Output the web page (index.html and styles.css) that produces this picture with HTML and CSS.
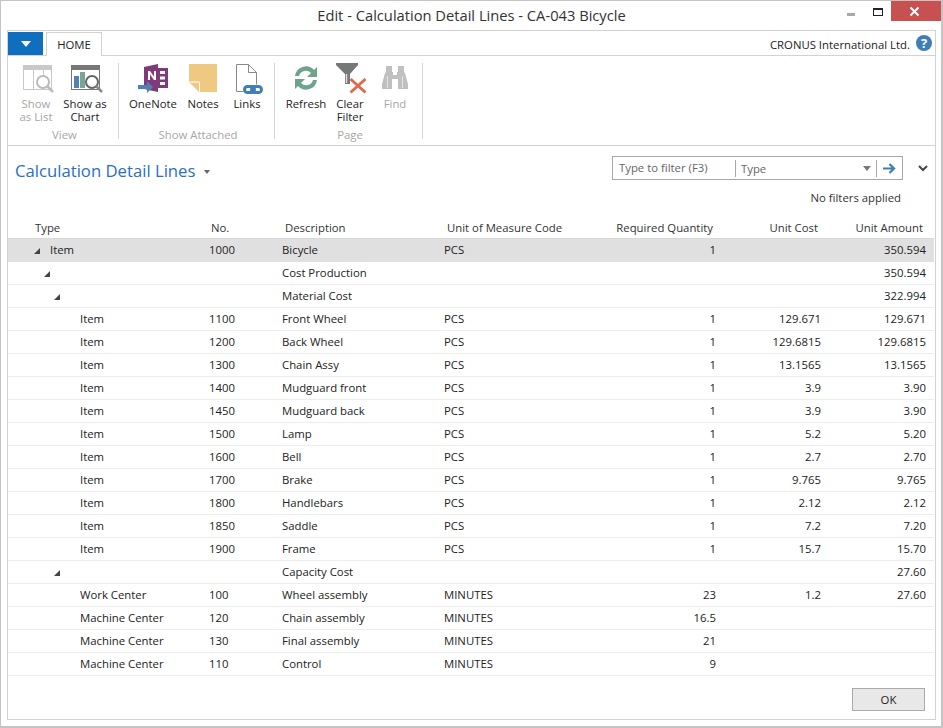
FILE: index.html
```html
<!DOCTYPE html>
<html lang="en">
<head>
<meta charset="utf-8">
<title>Edit - Calculation Detail Lines - CA-043 Bicycle</title>
<link rel="stylesheet" href="styles.css">
</head>
<body>
<div class="window">
  <header class="titlebar">
    <div class="title">Edit - Calculation Detail Lines - CA-043 Bicycle</div>
    <div class="controls">
      <span class="min"></span>
      <span class="max"></span>
      <span class="close"><svg width="11" height="11" viewBox="0 0 11 11"><path d="M1.5 1.5l8 8M9.5 1.5l-8 8" stroke="#fff" stroke-width="2"/></svg></span>
    </div>
  </header>
  <div class="frame">
    <div class="tabs">
      <div class="appbtn"><svg width="10" height="6" viewBox="0 0 10 6"><path d="M0 0h10L5 6z" fill="#fff"/></svg></div>
      <div class="tab">HOME</div>
      <div class="company">CRONUS International Ltd.</div>
      <div class="help">?</div>
    </div>
    <div class="ribbon">
      <section class="group g-view">
        <div class="actions">
          <div class="action off w1">
            <svg width="36" height="30" viewBox="0 0 36 30"><rect x="5.500" y="2.500" width="28" height="24" fill="#fff" stroke="#c8c8c8"/><rect x="5" y="2" width="29" height="5" fill="#c8c8c8"/><path d="M15.500 7v19M25.500 7v19" stroke="#c8c8c8"/><circle cx="25" cy="19" r="6" fill="#fff" stroke="#bbb" stroke-width="2"/><path d="M29 23l6 6" stroke="#bbb" stroke-width="2.500"/></svg>
            <span>Show<br>as List</span>
          </div>
          <div class="action w2">
            <svg width="36" height="30" viewBox="0 0 36 30"><rect x="4.500" y="2.500" width="28" height="24" fill="#fff" stroke="#777"/><rect x="4" y="2" width="29" height="5" fill="#777"/><rect x="7" y="13" width="5" height="12" fill="#4f81b5"/><rect x="13" y="9" width="5" height="16" fill="#7aa58f"/><circle cx="25" cy="19" r="6" fill="#fff" stroke="#666" stroke-width="2"/><path d="M29 23l6 6" stroke="#888" stroke-width="2.500"/></svg>
            <span>Show as<br>Chart</span>
          </div>
        </div>
        <div class="gname">View</div>
      </section>
      <section class="group g-att">
        <div class="actions">
          <div class="action w3">
            <svg width="32" height="30" viewBox="0 0 32 30"><path d="M7 4l14-3v28l-14-3z" fill="#80397b"/><rect x="21" y="5" width="10" height="20" fill="#80397b"/><path d="M23 8h5v3h-5zM23 13.500h5v3h-5zM23 19h5v3h-5z" fill="#fff"/><path d="M11 17V8h2l4 5.500V8h2v9h-2l-4-5.500V17z" fill="#fff"/><path d="M1 22h9v-4l6 6-6 6v-4H1z" fill="#4f81b5"/></svg>
            <span>OneNote</span>
          </div>
          <div class="action w4">
            <svg width="28" height="28" viewBox="0 0 28 28"><path d="M0 0h28v28H10L0 18z" fill="#efc882"/><path d="M0.500 18h10v9.500" fill="none" stroke="#fff"/></svg>
            <span>Notes</span>
          </div>
          <div class="action w5">
            <svg width="32" height="30" viewBox="0 0 32 30"><path d="M5.500 1.500h12l8 8v12M5.500 1.500v27h7M17.500 1.500v8h8" fill="#fff" stroke="#888"/><g fill="none" stroke="#3f7fb5" stroke-width="3"><rect x="13.500" y="23.500" width="10" height="6" rx="3"/><rect x="20.500" y="23.500" width="10" height="6" rx="3"/></g></svg>
            <span>Links</span>
          </div>
        </div>
        <div class="gname">Show Attached</div>
      </section>
      <section class="group g-page">
        <div class="actions">
          <div class="action w6">
            <svg width="28" height="28" viewBox="0 0 28 28"><path d="M3 12a11 11 0 0 1 19-6l3-3v10H15l4-4A7 7 0 0 0 7 12z" fill="#6fa48c"/><path d="M25 16a11 11 0 0 1-19 6l-3 3V15h10l-4 4a7 7 0 0 0 12-3z" fill="#6fa48c"/></svg>
            <span>Refresh</span>
          </div>
          <div class="action w7">
            <svg width="36" height="30" viewBox="0 0 36 30"><path d="M4 0h22v2l-8 9v10h-5V11L4 2z" fill="#777"/><path d="M14.500 11v9" stroke="#ddd" stroke-width="1.500"/><path d="M18.500 16l15 13.500M33.500 16l-15 13.500" stroke="#dc6a4e" stroke-width="3"/></svg>
            <span>Clear<br>Filter</span>
          </div>
          <div class="action off w8">
            <svg width="28" height="30" viewBox="0 0 28 30"><path d="M5 3h6v6h1v3h4V9h1V3h6v6l1 1 3 11v5H17V16h-6v10H1v-5l3-11 1-1z" fill="#c0c0c0"/><path d="M6.500 13v12M21.500 13v12" stroke="#e4e4e4"/></svg>
            <span>Find</span>
          </div>
        </div>
        <div class="gname">Page</div>
      </section>
    </div>
    <main class="content">
      <div class="pagehead">
        <h1 class="pagetitle">Calculation Detail Lines<svg class="caret" width="6" height="4" viewBox="0 0 6 4"><path d="M0 0h6L3 4z" fill="#666"/></svg></h1>
        <div class="filterwrap">
          <div class="filterrow">
            <div class="filter">
              <div class="f-input">Type to filter (F3)</div>
              <div class="f-field">Type<svg width="8" height="5" viewBox="0 0 8 5"><path d="M0 0h8L4 5z" fill="#777"/></svg></div>
              <div class="f-go"><svg width="13" height="11" viewBox="0 0 13 11"><path d="M0 5.500h10M6.500 1l4.500 4.500L6.500 10" fill="none" stroke="#3f7fb5" stroke-width="2.200"/></svg></div>
            </div>
            <svg class="chev" width="10" height="7" viewBox="0 0 10 7"><path d="M1 1l4 4 4-4" fill="none" stroke="#444" stroke-width="2"/></svg>
          </div>
          <div class="nofilter">No filters applied</div>
        </div>
      </div>
      <table class="grid">
        <colgroup>
          <col class="c1"><col class="c2"><col class="c3"><col class="c4"><col class="c5"><col class="c6"><col class="c7">
        </colgroup>
        <thead>
          <tr><th class="h-type">Type</th><th class="l h-no">No.</th><th class="l">Description</th><th class="l">Unit of Measure Code</th><th class="r">Required Quantity</th><th class="r">Unit Cost</th><th class="r">Unit Amount</th></tr>
        </thead>
        <tbody>
          <tr class="sel"><td class="tree"><i class="arr a0"></i>Item</td><td>1000</td><td>Bicycle</td><td>PCS</td><td class="n">1</td><td class="n"></td><td class="n">350.594</td></tr>
          <tr><td class="tree"><i class="arr a1"></i></td><td></td><td>Cost Production</td><td></td><td class="n"></td><td class="n"></td><td class="n">350.594</td></tr>
          <tr><td class="tree"><i class="arr a2"></i></td><td></td><td>Material Cost</td><td></td><td class="n"></td><td class="n"></td><td class="n">322.994</td></tr>
          <tr><td class="leaf">Item</td><td>1100</td><td>Front Wheel</td><td>PCS</td><td class="n">1</td><td class="n">129.671</td><td class="n">129.671</td></tr>
          <tr><td class="leaf">Item</td><td>1200</td><td>Back Wheel</td><td>PCS</td><td class="n">1</td><td class="n">129.6815</td><td class="n">129.6815</td></tr>
          <tr><td class="leaf">Item</td><td>1300</td><td>Chain Assy</td><td>PCS</td><td class="n">1</td><td class="n">13.1565</td><td class="n">13.1565</td></tr>
          <tr><td class="leaf">Item</td><td>1400</td><td>Mudguard front</td><td>PCS</td><td class="n">1</td><td class="n">3.9</td><td class="n">3.90</td></tr>
          <tr><td class="leaf">Item</td><td>1450</td><td>Mudguard back</td><td>PCS</td><td class="n">1</td><td class="n">3.9</td><td class="n">3.90</td></tr>
          <tr><td class="leaf">Item</td><td>1500</td><td>Lamp</td><td>PCS</td><td class="n">1</td><td class="n">5.2</td><td class="n">5.20</td></tr>
          <tr><td class="leaf">Item</td><td>1600</td><td>Bell</td><td>PCS</td><td class="n">1</td><td class="n">2.7</td><td class="n">2.70</td></tr>
          <tr><td class="leaf">Item</td><td>1700</td><td>Brake</td><td>PCS</td><td class="n">1</td><td class="n">9.765</td><td class="n">9.765</td></tr>
          <tr><td class="leaf">Item</td><td>1800</td><td>Handlebars</td><td>PCS</td><td class="n">1</td><td class="n">2.12</td><td class="n">2.12</td></tr>
          <tr><td class="leaf">Item</td><td>1850</td><td>Saddle</td><td>PCS</td><td class="n">1</td><td class="n">7.2</td><td class="n">7.20</td></tr>
          <tr><td class="leaf">Item</td><td>1900</td><td>Frame</td><td>PCS</td><td class="n">1</td><td class="n">15.7</td><td class="n">15.70</td></tr>
          <tr><td class="tree"><i class="arr a2"></i></td><td></td><td>Capacity Cost</td><td></td><td class="n"></td><td class="n"></td><td class="n">27.60</td></tr>
          <tr><td class="leaf">Work Center</td><td>100</td><td>Wheel assembly</td><td>MINUTES</td><td class="n">23</td><td class="n">1.2</td><td class="n">27.60</td></tr>
          <tr><td class="leaf">Machine Center</td><td>120</td><td>Chain assembly</td><td>MINUTES</td><td class="n">16.5</td><td class="n"></td><td class="n"></td></tr>
          <tr><td class="leaf">Machine Center</td><td>130</td><td>Final assembly</td><td>MINUTES</td><td class="n">21</td><td class="n"></td><td class="n"></td></tr>
          <tr><td class="leaf">Machine Center</td><td>110</td><td>Control</td><td>MINUTES</td><td class="n">9</td><td class="n"></td><td class="n"></td></tr>
        </tbody>
      </table>
      <div class="footer"><button class="ok" type="button">OK</button></div>
    </main>
  </div>
</div>
</body>
</html>
```
FILE: styles.css
```css
* { box-sizing: border-box; }
html, body { margin: 0; padding: 0; }
body {
  width: 943px;
  height: 728px;
  overflow: hidden;
  font-family: "Open Sans", "Liberation Sans", sans-serif;
  font-size: 11.35px;
  color: #222;
  background: #fff;
}
.window {
  width: 943px;
  height: 728px;
  display: flex;
  flex-direction: column;
  border: 1px solid #c4c4c4;
  border-width: 1px 2px 2px 1px;
  padding: 0 5px 6px 6px;
  background: #fff;
}
.titlebar {
  height: 29px;
  flex: none;
  display: flex;
  position: relative;
  align-items: center;
  justify-content: center;
  padding-bottom: 2px;
}
.title { font-size: 14.7px; color: #333; }
.controls {
  position: absolute;
  right: -5px;
  top: 0;
  display: flex;
  align-items: flex-start;
}
.min { width: 8px; height: 3px; background: #a8a8a8; margin: 12px 18px 0 0; }
.max { width: 10px; height: 8px; border: 1px solid #222; border-top-width: 2px; margin: 7px 8px 0 0; }
.close { width: 50px; height: 20px; padding-right: 4px; background: #c75050; display: flex; align-items: center; justify-content: center; }
.frame {
  flex: 1;
  display: flex;
  flex-direction: column;
  border: 1px solid #d2d2d2;
  min-height: 0;
}
.tabs {
  height: 25px;
  flex: none;
  display: flex;
  align-items: flex-end;
  position: relative;
  border-bottom: 1px solid #d2d2d2;
  padding: 0 3px 0 0;
}
.appbtn {
  width: 35px;
  height: 23px;
  background: #106ebe;
  display: flex;
  align-items: center;
  justify-content: center;
  margin-top: 1px;
  align-self: flex-start;
}
.tab {
  width: 56px;
  height: 24px;
  margin: 0 0 -1px 3px;
  border: 1px solid #d2d2d2;
  border-bottom: 0;
  background: #fff;
  color: #222;
  display: flex;
  align-items: center;
  justify-content: center;
}
.company { margin-left: auto; align-self: center; padding-top: 2px; }
.help {
  width: 16px;
  height: 16px;
  margin: 0 0 4px 6px;
  border-radius: 50%;
  background: #3f7fb5;
  color: #fff;
  font-weight: 700;
  font-size: 13px;
  line-height: 16px;
  text-align: center;
}
.ribbon {
  height: 90px;
  flex: none;
  display: flex;
  padding-top: 7px;
  border-bottom: 1px solid #d2d2d2;
}
.group {
  height: 76px;
  display: flex;
  flex-direction: column;
  border-right: 1px solid #d6d6d6;
  flex: none;
}
.g-view { width: 111px; padding-left: 6px; }
.g-att { width: 156px; padding-left: 6px; }
.g-page { width: 148px; padding-left: 6px; }
.actions { display: flex; flex: 1; align-items: flex-start; }
.action {
  display: flex;
  flex-direction: column;
  align-items: center;
  text-align: center;
  line-height: 13px;
  color: #222;
}
.action svg { display: block; height: 30px; margin-bottom: 4px; overflow: visible; }
.action.off { color: #a6a6a6; }
.w1 { width: 44px; }
.w2 { width: 54px; }
.w3 { width: 56px; }
.w4 { width: 44px; }
.w5 { width: 44px; }
.w6 { width: 50px; }
.w7 { width: 38px; }
.w8 { width: 52px; }
.gname { text-align: center; color: #a6a6a6; height: 15px; line-height: 15px; padding-right: 3px; margin-bottom: -3px; }
.content {
  flex: 1;
  display: flex;
  flex-direction: column;
  min-height: 0;
}
.pagehead {
  height: 67px;
  flex: none;
  display: flex;
  justify-content: space-between;
  align-items: flex-start;
}
.pagetitle {
  margin: 13px 0 0 7px;
  font-size: 16.7px;
  font-weight: 400;
  line-height: 24px;
  color: #2a6fc0;
}
.caret { margin-left: 9px; vertical-align: 3px; }
.filterwrap { width: 323px; padding-top: 10px; }
.filterrow { display: flex; align-items: center; }
.filter {
  width: 291px;
  height: 24px;
  border: 1px solid #a8a8a8;
  display: flex;
  align-items: center;
  color: #666;
}
.f-input { width: 123px; height: 17px; line-height: 15px; padding-left: 6px; border-right: 1px solid #a8a8a8; }
.f-field { width: 141px; height: 17px; line-height: 17px; padding: 0 5px; border-right: 1px solid #a8a8a8; display: flex; justify-content: space-between; align-items: center; }
.f-go { flex: 1; display: flex; align-items: center; justify-content: center; }
.chev { margin-left: 15px; }
.nofilter { text-align: right; padding: 10px 34px 0 0; color: #333; }
.grid {
  width: 926px;
  border-collapse: collapse;
  table-layout: fixed;
}
.c1 { width: 198px; }
.c2 { width: 73px; }
.c3 { width: 162px; }
.c4 { width: 160px; }
.c5 { width: 118px; }
.c6 { width: 105px; }
.c7 { width: 110px; }
.grid th {
  height: 25px;
  font-weight: 400;
  line-height: 16px;
  vertical-align: bottom;
  padding: 0 6px 2px;
  border-bottom: 1px solid #d8d8d8;
  color: #333;
}
.grid th.l { text-align: left; padding-left: 6px; }
.grid th.h-no { padding-left: 5px; }
.grid th.r { text-align: right; }
.grid th.r:last-child { padding-right: 11px; }
.grid th.h-type { text-align: left; padding-left: 27px; }
.grid td {
  height: 23px;
  padding: 0 3px;
  border-bottom: 1px solid #ededed;
  white-space: nowrap;
}
.grid td.n { text-align: right; }
.grid td.n:last-child { padding-right: 8px; }
.grid td.leaf { padding-left: 72px; }
.grid td.tree { padding-left: 42px; position: relative; }
.sel td { background: #e0e0e0; border-bottom-color: #e0e0e0; }
.arr {
  position: absolute;
  top: 9px;
  width: 0;
  height: 0;
  border-style: solid;
  border-width: 0 0 6px 6px;
  border-color: transparent transparent #444 transparent;
}
.a0 { left: 26px; }
.a1 { left: 36px; }
.a2 { left: 46px; }
.footer {
  flex: 1;
  display: flex;
  justify-content: flex-end;
  align-items: flex-start;
  padding: 12px 10px 0 0;
}
.ok {
  width: 73px;
  height: 23px;
  border: 1px solid #aaa;
  background: #e8e8e8;
  font: inherit;
  color: #222;
  padding: 0;
}
```
